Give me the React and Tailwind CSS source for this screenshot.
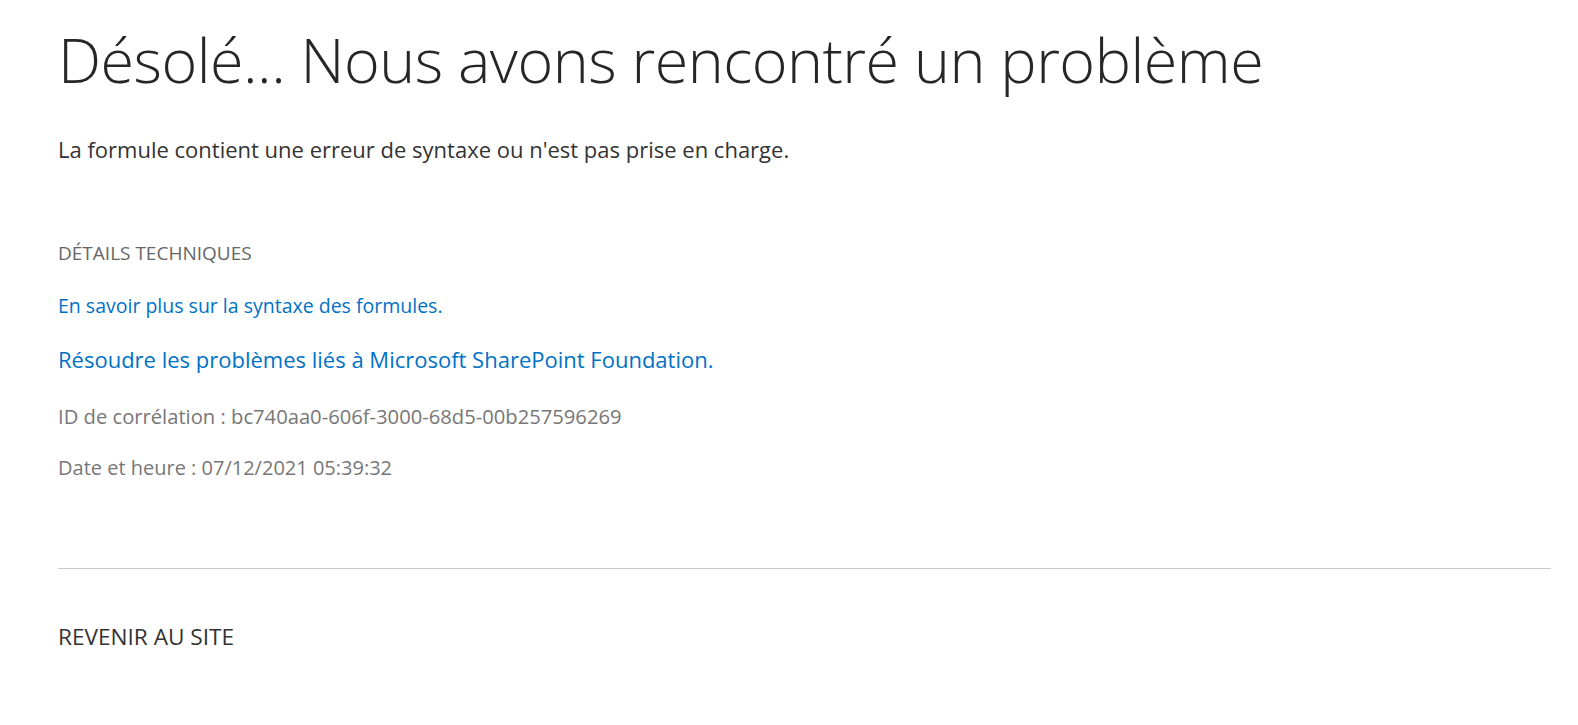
export default function App() {
  return (
    <div className="min-h-screen bg-white font-['Open_Sans','Noto_Sans',sans-serif]">
      <div className="pl-[58px] pr-[27px] pt-[20px]">
        <h1 className="text-[61px] leading-[80px] font-light text-[#262626] tracking-[-0.5px]">
          Désolé... Nous avons rencontré un problème
        </h1>
        <p className="mt-[34px] text-[22px] leading-[30px] text-[#333333]">
          La formule contient une erreur de syntaxe ou n'est pas prise en charge.
        </p>

        <div className="mt-[74px] text-[19px] leading-[30px] text-[#666666] uppercase">Détails techniques</div>
        <div className="mt-[23px] text-[19.5px] leading-[30px]">
          <a href="#" className="text-[#0072c6]">
            En savoir plus sur la syntaxe des formules.
          </a>
        </div>
        <div className="mt-[23px] text-[22px] leading-[30px]">
          <a href="#" className="text-[#0072c6]">
            Résoudre les problèmes liés à Microsoft SharePoint Foundation.
          </a>
        </div>
        <div className="mt-[27px] text-[20.2px] leading-[30px] text-[#777777]">
          ID de corrélation : bc740aa0-606f-3000-68d5-00b257596269
        </div>
        <div className="mt-[22px] text-[20px] leading-[30px] text-[#777777]">
          Date et heure : 07/12/2021 05:39:32
        </div>

        <hr className="mt-[85px] border-0 border-t border-[#c8c8c8]" />

        <div className="mt-[53px] text-[22.6px] leading-[30px]">
          <a href="#" className="text-[#333333]">
            REVENIR AU SITE
          </a>
        </div>
      </div>
    </div>
  );
}
